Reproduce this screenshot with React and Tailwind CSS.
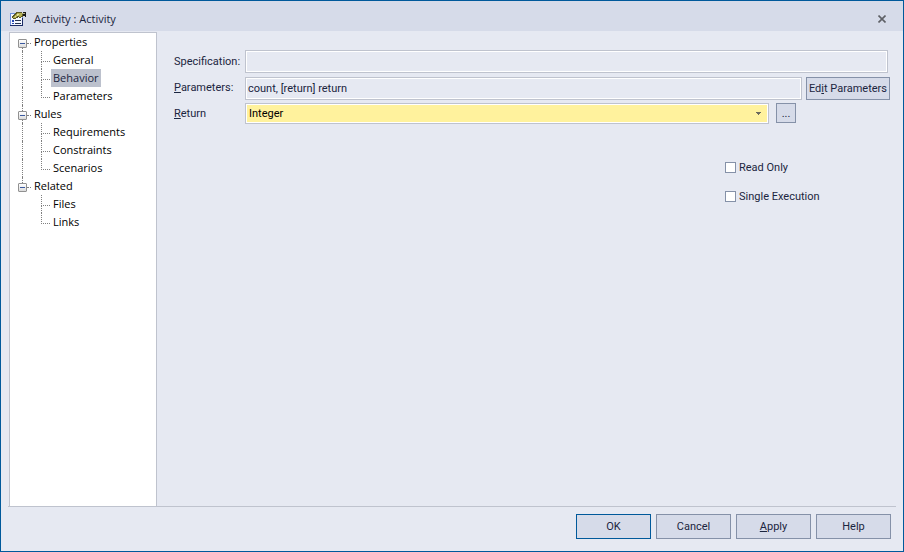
import React, { useState } from 'react'

const tree = [
  { label: 'Properties', items: ['General', 'Behavior', 'Parameters'] },
  { label: 'Rules', items: ['Requirements', 'Constraints', 'Scenarios'] },
  { label: 'Related', items: ['Files', 'Links'] },
]

const footerButtons = [
  { id: 'ok', label: 'OK', primary: true },
  { id: 'cancel', label: 'Cancel' },
  { id: 'apply', label: <><u>A</u>pply</> },
  { id: 'help', label: 'Help' },
]

function DialogIcon() {
  return (
    <svg width="16" height="16" viewBox="0 0 16 16" shapeRendering="crispEdges" aria-hidden="true">
      <path d="M0 2h13v13H0z" fill="#6f8fdc" />
      <path d="M1 3h11v11H1z" fill="#f4f7ff" />
      <path d="M0 14h13v1H0zM12 7h1v8h-1z" fill="#1c2c66" />
      <path d="M2 9h2v2H2zM2 12h2v1H2z" fill="#2547b0" />
      <path d="M5 9h6v1H5zM5 12h6v1H5z" fill="#26344f" />
      <path d="M1 7h1V5h1V4h1V3h1V2h1V1h6v1h1v4h-2v1H9V6H8v1H6v1H3V7z" fill="#5a5724" />
      <path d="M3 6h1V5h1V4h1V3h1V2h5v3h-1v1H9V5H7v1H6v1H3z" fill="#b5b052" />
      <path d="M7 3h2v1H8v1H7zM5 5h1v1H5z" fill="#e6e29a" />
      <path d="M13 1h3v5h-1V5h-2z" fill="#1a1a18" />
      <path d="M12 2h3v1h-3z" fill="#b4b184" />
    </svg>
  )
}

function TreeGroup({ group, last, selected, onSelect }) {
  const [open, setOpen] = useState(true)

  return (
    <li>
      <div className="flex h-[18px] pl-2">
        <div className="flex w-[9px] flex-col items-center">
          <span className={`h-[6px] border-l border-dotted border-[#808080] ${group.label === 'Properties' ? 'invisible' : ''}`} />
          <button
            aria-label={`Toggle ${group.label}`}
            aria-expanded={open}
            onClick={() => setOpen(!open)}
            className="flex h-[9px] w-[9px] shrink-0 items-center justify-center rounded-[1px] border border-[#919191] bg-linear-to-b from-white to-[#dcdcdc]"
          >
            <svg width="5" height="5" viewBox="0 0 5 5" shapeRendering="crispEdges">
              <path d={open ? 'M0 2h5v1H0z' : 'M0 2h5v1H0zM2 0h1v5H2z'} fill="#3b5aa0" />
            </svg>
          </button>
          <span className={`h-[3px] border-l border-dotted border-[#808080] ${last ? 'invisible' : ''}`} />
        </div>
        <span className="h-[11px] w-1 border-b border-dotted border-[#808080]" />
        <span className="pl-[3px] leading-[18px]">{group.label}</span>
      </div>
      {open && (
        <ul>
          {group.items.map((item, i) => (
            <li key={item} className="flex h-[18px] pl-3">
              <span className={`w-[19px] border-l border-dotted ${last ? 'border-transparent' : 'border-[#808080]'}`} />
              <span className="flex w-[9px] flex-col">
                <span className="h-[11px] border-b border-l border-dotted border-[#808080]" />
                <span className={`flex-1 border-l border-dotted ${i === group.items.length - 1 ? 'border-transparent' : 'border-[#808080]'}`} />
              </span>
              <button
                onClick={() => onSelect(item)}
                className={`ml-px px-[2px] leading-[18px] ${selected === item ? 'bg-[#bcc1cd] text-[#1b2540]' : ''}`}
              >
                {item}
              </button>
            </li>
          ))}
        </ul>
      )}
    </li>
  )
}

function CheckOption({ id, label }) {
  return (
    <div className="flex h-[13px] items-center gap-[3px]">
      <input
        id={id}
        type="checkbox"
        className="h-[11px] w-[11px] appearance-none border border-[#8591a8] bg-white checked:bg-[#00599b]"
      />
      <label htmlFor={id} className="pt-[2px]">{label}</label>
    </div>
  )
}

const fieldClass = 'min-w-0 flex-1 border border-[#bfc3ce] pt-[2px] shadow-[inset_0_0_0_1px_#ffffff] outline-none'
const buttonClass = 'border border-[#8591a8] bg-[#d6dbe9]'

export default function App() {
  const [selected, setSelected] = useState('Behavior')

  return (
    <div className="flex h-screen flex-col border border-[#00599b] bg-[#e6e9f2] font-['Roboto',sans-serif] text-[11px] text-[#1b2540]">
      <header className="flex h-[30px] shrink-0 items-center bg-[#d6dbe9] pt-[6px] pr-[13px] pl-[9px]">
        <DialogIcon />
        <h1 className="ml-2 flex-1 font-['Open_Sans',sans-serif]">Activity : Activity</h1>
        <button aria-label="Close" className="p-1">
          <svg width="8" height="8" viewBox="0 0 8 8" aria-hidden="true">
            <path d="M0.5 0.5l7 7M7.5 0.5l-7 7" stroke="#5e6066" strokeWidth="1.6" />
          </svg>
        </button>
      </header>

      <main className="mx-[7px] mt-px flex min-h-0 flex-1 border-b border-[#bfc3ce]">
        <nav className="ml-px w-[148px] shrink-0 overflow-auto border-x border-t border-[#bfc3ce] bg-white font-['Open_Sans',sans-serif] text-black">
          <ul>
            {tree.map((group, i) => (
              <TreeGroup
                key={group.label}
                group={group}
                last={i === tree.length - 1}
                selected={selected}
                onSelect={setSelected}
              />
            ))}
          </ul>
        </nav>

        <form className="flex min-w-0 flex-1 flex-col pt-[18px] pr-[6px] pl-[17px]" onSubmit={(e) => e.preventDefault()}>
          <div className="mb-1 flex h-[23px] pr-[2px]">
            <label htmlFor="specification" className="w-[71px] leading-[24px]">Specification:</label>
            <input id="specification" readOnly className={`${fieldClass} px-[2px]`} />
          </div>

          <div className="mb-[3px] flex h-[23px]">
            <label htmlFor="parameters" className="w-[71px] leading-[22px]"><u>P</u>arameters:</label>
            <input id="parameters" readOnly defaultValue="count, [return] return" className={`${fieldClass} px-[2px]`} />
            <button className={`ml-1 w-[84px] pt-[2px] whitespace-nowrap ${buttonClass}`}>Ed<u>i</u>t Parameters</button>
          </div>

          <div className="flex h-[21px] pr-[94px]">
            <label htmlFor="return" className="w-[71px] leading-[22px]"><u>R</u>eturn</label>
            <div className="relative flex min-w-0 flex-1">
              <select id="return" className={`${fieldClass} appearance-none bg-[#fff29d] px-[3px] text-black`}>
                <option>Integer</option>
                <option>Boolean</option>
                <option>String</option>
              </select>
              <svg className="pointer-events-none absolute top-[9px] right-2" width="5" height="3" viewBox="0 0 5 3" shapeRendering="crispEdges">
                <path d="M0 0h5v1H4v1H3v1H2V2H1V1H0z" fill="#6b6a5e" />
              </svg>
            </div>
            <button aria-label="Browse return type" className={`ml-[7px] h-5 w-5 leading-none ${buttonClass}`}>...</button>
          </div>

          <div className="mt-[37px] ml-auto flex w-[165px] flex-col gap-4">
            <CheckOption id="read-only" label="Read Only" />
            <CheckOption id="single-execution" label="Single Execution" />
          </div>
        </form>
      </main>

      <footer className="flex shrink-0 justify-end gap-[5px] pt-[7px] pr-3 pb-3">
        {footerButtons.map((btn) => (
          <button
            key={btn.id}
            className={`h-[25px] w-[75px] border bg-[#d6dbe9] pt-[2px] ${btn.primary ? 'border-[#00599b]' : 'border-[#8591a8]'}`}
          >
            {btn.label}
          </button>
        ))}
      </footer>
    </div>
  )
}
